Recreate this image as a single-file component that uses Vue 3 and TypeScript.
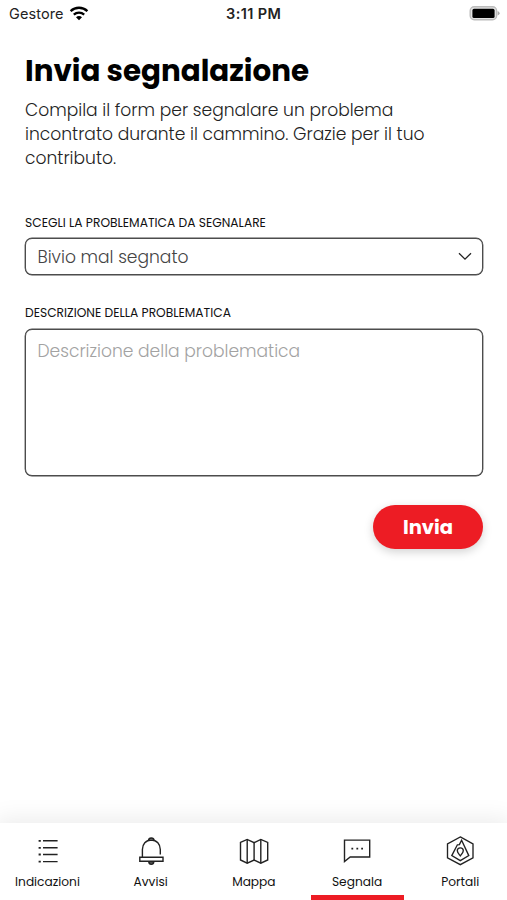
<script setup lang="ts">
import { ref } from 'vue'

type TabId = 'indicazioni' | 'avvisi' | 'mappa' | 'segnala' | 'portali'

const tabs: { id: TabId; label: string }[] = [
  { id: 'indicazioni', label: 'Indicazioni' },
  { id: 'avvisi', label: 'Avvisi' },
  { id: 'mappa', label: 'Mappa' },
  { id: 'segnala', label: 'Segnala' },
  { id: 'portali', label: 'Portali' },
]
const active = ref<TabId>('segnala')
const description = ref('')
</script>

<template>
  <div class="screen">
    <header class="status">
      <div class="carrier">
        <span>Gestore</span>
        <svg class="wifi" width="20" height="15" viewBox="0 0 20 15" fill="none" stroke="#000" stroke-width="2.3">
          <path d="M1.6 5.2C6.4 .6 13.6 .6 18.4 5.2" />
          <path d="M4.8 8.6C7.8 5.9 12.2 5.9 15.2 8.6" />
          <path d="M7 11.2C8.8 9.7 11.2 9.7 13 11.2L10 14.2Z" fill="#000" stroke="none" />
        </svg>
      </div>
      <time class="clock">3:11 PM</time>
      <svg class="battery" width="31" height="15" viewBox="0 0 31 15">
        <rect x="1.2" y=".8" width="26.4" height="13" rx="4" fill="#e4e4e4" stroke="#bcbcbc" stroke-width="1.4" />
        <rect x="3.4" y="2.8" width="22.2" height="9.2" rx="1.6" fill="#000" />
        <path d="M28.6 5v4.6q2-.8 2-2.3T28.6 5Z" fill="#aaa" />
      </svg>
    </header>

    <main class="content">
      <h1>Invia segnalazione</h1>
      <p class="intro">
        Compila il form per segnalare un problema<br>
        incontrato durante il cammino. Grazie per il tuo<br>
        contributo.
      </p>

      <label class="caption first">SCEGLI LA PROBLEMATICA DA SEGNALARE</label>
      <div class="select" role="combobox" tabindex="0">
        <span>Bivio mal segnato</span>
        <svg width="14" height="9" viewBox="0 0 14 9" fill="none" stroke="#222" stroke-width="1.3">
          <path d="M1 1.2 7 7.2 13 1.2" />
        </svg>
      </div>

      <label class="caption second" for="descrizione">DESCRIZIONE DELLA PROBLEMATICA</label>
      <textarea id="descrizione" v-model="description" placeholder="Descrizione della problematica" />

      <button class="submit" type="button">Invia</button>
    </main>

    <nav class="tabs">
      <a v-for="tab in tabs" :key="tab.id" class="tab" :class="{ active: tab.id === active }" @click="active = tab.id">
        <svg class="icon" width="32" height="32" viewBox="0 0 32 32" fill="none" stroke="#222" stroke-width="1.4">
          <g v-if="tab.id === 'indicazioni'">
            <path d="M11 5.8H25.6M11 12.8H25.6M11 19.5H25.6M11 26.6H25.6" />
            <path d="M6.6 5.8H8.8M6.6 12.8H8.8M6.6 19.5H8.8M6.6 26.6H8.8" stroke-width="1.8" />
          </g>
          <g v-else-if="tab.id === 'avvisi'">
            <path d="M7.4 22.2V14.5C7.4 9.2 10.8 5 16.3 5S25.3 9.2 25.3 14.5V19.5" />
            <path d="M13.5 5.4C13.8 2.2 18.8 2.2 19.1 5.4Z" fill="#777" />
            <path d="M4.8 22.3H28V26.3H4.8Z" />
            <path d="M13.8 26.9C14 30 18.6 30 18.8 26.9Z" fill="#777" />
          </g>
          <g v-else-if="tab.id === 'mappa'">
            <path d="M2.5 7.4 9.2 4.4 16.1 7.7 22.8 4.4 29.7 7.4V25L22.8 28.2 16.1 25 9.2 28.2 2.5 25Z" />
            <path d="M9.2 4.4V28.2M16.1 7.7V25M22.8 4.4V28.2" />
          </g>
          <g v-else-if="tab.id === 'segnala'">
            <path d="M3.5 5.1H28.7V22H9.2L3.5 26.6Z" />
            <path d="M10.4 13.6H12.2M15.4 13.6H17.2M20.2 13.6H22" stroke-width="1.8" />
          </g>
          <g v-else stroke-width="1.35">
            <path d="M16.3 1.9 29 8.8V22.8L16.3 29.7 3.5 22.8V8.8Z" />
            <path d="M17.6 5.2 24.8 20.6 16.3 25.6 7.8 20.6 13.4 9.8 15.4 9.6Z" />
            <path d="M16.3 20.9C14.8 19 13.3 17.6 13.3 15.8A3 3 0 0 1 19.3 15.8C19.3 17.6 17.8 19 16.3 20.9Z" />
          </g>
        </svg>
        <span class="tab-label">{{ tab.label }}</span>
      </a>
    </nav>
  </div>
</template>

<style>
body {
  margin: 0;
  background: #fff;
}
</style>

<style scoped>
.screen {
  display: flex;
  flex-direction: column;
  width: 507px;
  height: 900px;
  overflow: hidden;
  background: #fff;
  color: #000;
  font-family: Poppins, Inter, "Liberation Sans", sans-serif;
}
.status {
  display: grid;
  grid-template-columns: 1fr auto 1fr;
  align-items: center;
  height: 28px;
  padding: 0 7px 0 9px;
  font-family: Inter, sans-serif;
  font-size: 14.5px;
}
.carrier {
  display: flex;
  align-items: center;
  gap: 5px;
  margin-top: -1px;
  color: #222;
}
.carrier span {
  letter-spacing: 0.1px;
}
.wifi {
  margin-top: -1px;
}
.clock {
  margin: -2px 1.5px 0 0;
  font-size: 14.5px;
  font-weight: 600;
  letter-spacing: 0.4px;
  color: #222;
}
.battery {
  justify-self: end;
  margin-top: -2px;
}
.content {
  display: flex;
  flex: 1;
  flex-direction: column;
  padding: 24px 24px 0 25px;
}
h1 {
  margin: 0;
  font-size: 29.35px;
  font-weight: 700;
  line-height: 38px;
  white-space: nowrap;
}
.intro {
  margin: 8px 0 0;
  color: #222;
  font-size: 17.12px;
  font-weight: 300;
  line-height: 24px;
  white-space: nowrap;
}
.caption {
  color: #111;
  font-size: 12.25px;
  font-weight: 400;
  line-height: 18px;
}
.first {
  margin-top: 44px;
}
.second {
  margin-top: 29px;
}
.select,
textarea {
  box-sizing: border-box;
  width: 458px;
  border: 1px solid #4c4c4c;
  border-radius: 7px;
  background: #fff;
  box-shadow: 0 0 0 0.4px #4c4c4c;
}
.select {
  display: flex;
  align-items: center;
  justify-content: space-between;
  height: 37px;
  margin-top: 6px;
  padding: 0 10px 0 11.5px;
  color: #444;
  font-size: 17.1px;
  font-weight: 300;
}
textarea {
  display: block;
  height: 147px;
  margin-top: 7px;
  padding: 9px 11.5px;
  font: 300 17.1px/24px Poppins, Inter, sans-serif;
  resize: none;
}
textarea::placeholder {
  color: #a2a2a2;
  opacity: 1;
}
.submit {
  align-self: flex-end;
  width: 110px;
  height: 44px;
  margin-top: 29px;
  padding: 1px 0 0;
  border: 0;
  border-radius: 22px;
  background: #ed1c24;
  box-shadow: 0 3px 10px rgb(0 0 0 / 18%);
  color: #fff;
  font: 700 19.5px/43px Poppins, Inter, sans-serif;
}
.tabs {
  display: grid;
  grid-template-columns: repeat(5, 93px);
  column-gap: 10.2px;
  box-sizing: border-box;
  height: 77px;
  padding-left: 1px;
  background: #fff;
  box-shadow: 0 0 22px 4px rgb(0 0 0 / 8%);
}
.tab {
  display: flex;
  flex-direction: column;
  align-items: center;
  box-sizing: border-box;
  padding-top: 12px;
  border-bottom: 5px solid transparent;
}
.active {
  border-bottom-color: #ed1c24;
}
.tab-label {
  margin-top: 6px;
  color: #111;
  font-size: 12.2px;
  line-height: 18px;
}
</style>
